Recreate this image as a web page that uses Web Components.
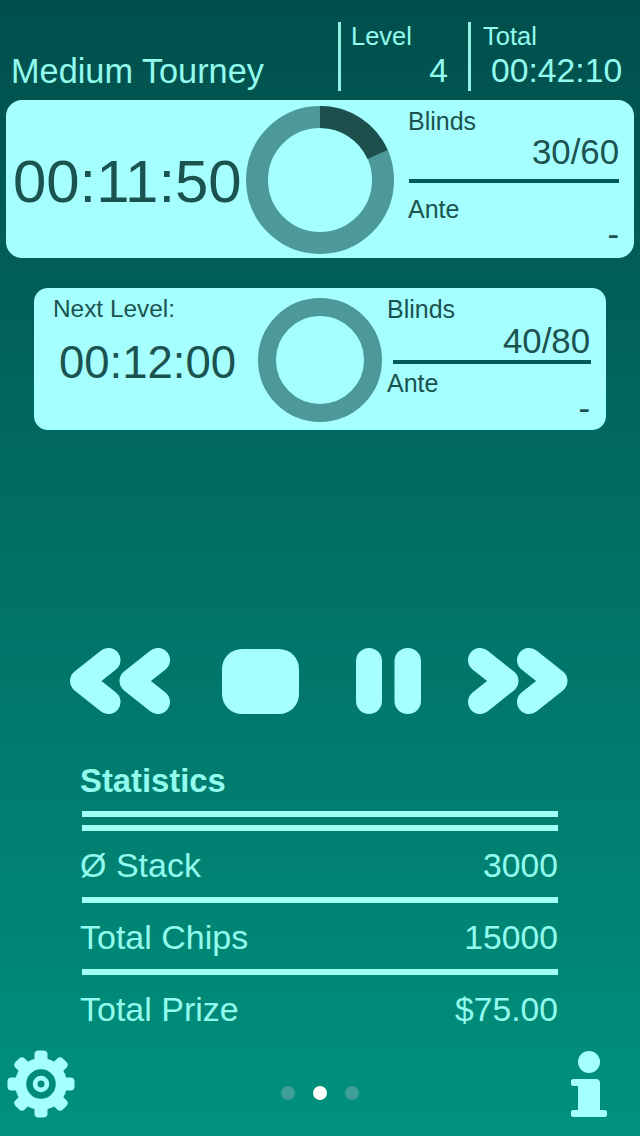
<!DOCTYPE html>
<html>
<head>
<meta charset="utf-8">
<title>Tourney</title>
<style>
    html, body {
        margin: 0;
        height: 1136px;
        overflow: hidden;
    }
    body {
        background: linear-gradient(180deg, #014f4c 0%, #00917e 100%);
        font-family: "Liberation Sans", Arial, sans-serif;
        color: #93fbee;
        display: flex;
        flex-direction: column;
    }
</style>
</head>
<body>
<tourney-header title="Medium Tourney" level="4" total="00:42:10"></tourney-header>
<timer-card time="00:11:50" blinds="30/60" ante="-" progress="66"></timer-card>
<timer-card compact time="00:12:00" blinds="40/80" ante="-">Next Level:</timer-card>
<transport-controls></transport-controls>
<stat-list heading="Statistics">
    <stat-row label="Ø Stack" value="3000"></stat-row>
    <stat-row label="Total Chips" value="15000"></stat-row>
    <stat-row label="Total Prize" value="$75.00"></stat-row>
</stat-list>
<bottom-bar></bottom-bar>

<script>
const components = [
    {
        name: 'tourney-header',
        class: class TourneyHeader extends HTMLElement {
            connectedCallback() {
                this.attachShadow({ mode: 'open' });
                this.shadowRoot.innerHTML = `
                    <style>
                        :host {
                            display: flex;
                            height: 69px;
                            padding-top: 22px;
                            margin-bottom: 9px;
                        }
                        .title {
                            width: 327px;
                            padding-left: 11px;
                            font-size: 34.3px;
                            line-height: 40px;
                            align-self: end;
                        }
                        .cell {
                            box-sizing: border-box;
                            border-left: 3px solid #8ff0e4;
                            width: 130px;
                            display: flex;
                            flex-direction: column;
                            padding-left: 10px;
                        }
                        .cell span:first-child {
                            font-size: 25.5px;
                            line-height: 28px;
                        }
                        .cell span:last-child {
                            font-size: 33.7px;
                            line-height: 40px;
                        }
                        .level span:last-child {
                            text-align: right;
                            padding-right: 20px;
                        }
                        .total {
                            width: 172px;
                            padding-left: 12px;
                        }
                        .total span:last-child {
                            padding-left: 8px;
                        }
                    </style>
                    <div class="title">${this.getAttribute('title')}</div>
                    <div class="cell level"><span>Level</span><span>${this.getAttribute('level')}</span></div>
                    <div class="cell total"><span>Total</span><span>${this.getAttribute('total')}</span></div>
                `;
            }
        }
    },
    {
        name: 'timer-card',
        class: class TimerCard extends HTMLElement {
            connectedCallback() {
                this.attachShadow({ mode: 'open' });
                const size = this.hasAttribute('compact') ? 124 : 148;
                const radius = this.hasAttribute('compact') ? 53 : 63;
                const width = this.hasAttribute('compact') ? 18 : 22;
                const circumference = 2 * Math.PI * radius;
                const progress = Number(this.getAttribute('progress') || 0) / 360 * circumference;
                this.shadowRoot.innerHTML = `
                    <style>
                        :host {
                            display: flex;
                            box-sizing: border-box;
                            width: 628px;
                            height: 158px;
                            margin-left: 6px;
                            background: #a5ffff;
                            border-radius: 16px;
                            color: #1b5350;
                            align-items: center;
                        }
                        :host([compact]) {
                            width: 572px;
                            height: 142px;
                            margin-left: 34px;
                            margin-top: 30px;
                            border-radius: 14px;
                        }
                        .clock {
                            box-sizing: border-box;
                            width: 240px;
                            padding-left: 7px;
                            font-size: 59.9px;
                            line-height: 64px;
                            margin-top: 6px;
                        }
                        :host([compact]) .clock {
                            width: 224px;
                            padding-left: 19px;
                            align-self: start;
                            margin-top: 7px;
                            font-size: 45.5px;
                            line-height: 50px;
                        }
                        .caption {
                            display: none;
                            font-size: 24.4px;
                            line-height: 28px;
                            margin-bottom: 15px;
                        }
                        :host([compact]) .caption {
                            display: block;
                        }
                        :host([compact]) .time {
                            margin-left: 6px;
                        }
                        svg {
                            display: block;
                            flex-shrink: 0;
                            margin-top: 2px;
                        }
                        .info {
                            align-self: start;
                            width: 211px;
                            margin-left: 14px;
                            padding-top: 7px;
                            display: flex;
                            flex-direction: column;
                        }
                        :host([compact]) .info {
                            width: 204px;
                            margin-left: 5px;
                        }
                        .label {
                            font-size: 25px;
                            line-height: 28px;
                        }
                        .value {
                            font-size: 34.8px;
                            line-height: 36px;
                            text-align: right;
                            margin-top: -1px;
                        }
                        :host([compact]) .value {
                            margin-top: 0;
                            padding-right: 1px;
                        }
                        .rule {
                            height: 3.5px;
                            background: #005a55;
                            margin: 9px 0 12px 1px;
                        }
                        :host([compact]) .rule {
                            margin: 1px 0 5px 6px;
                        }
                        .ante,
                        :host([compact]) .ante {
                            margin-top: -7px;
                        }
                    </style>
                    <div class="clock">
                        <div class="caption"><slot></slot></div>
                        <div class="time">${this.getAttribute('time')}</div>
                    </div>
                    <svg width="${size}" height="${size}" viewBox="0 0 ${size} ${size}">
                        <circle cx="${size / 2}" cy="${size / 2}" r="${radius}" fill="none" stroke="#4d9999" stroke-width="${width}"/>
                        <circle cx="${size / 2}" cy="${size / 2}" r="${radius}" fill="none" stroke="#1d4f4d" stroke-width="${width}"
                            stroke-dasharray="${progress} ${circumference}" transform="rotate(-90 ${size / 2} ${size / 2})"/>
                    </svg>
                    <div class="info">
                        <div class="label">Blinds</div>
                        <div class="value">${this.getAttribute('blinds')}</div>
                        <div class="rule"></div>
                        <div class="label">Ante</div>
                        <div class="value ante">${this.getAttribute('ante')}</div>
                    </div>
                `;
            }
        }
    },
    {
        name: 'transport-controls',
        class: class TransportControls extends HTMLElement {
            connectedCallback() {
                this.attachShadow({ mode: 'open' });
                this.shadowRoot.innerHTML = `
                    <style>
                        :host {
                            display: flex;
                            align-items: center;
                            height: 66px;
                            margin-top: 218px;
                            padding-left: 70px;
                        }
                        svg {
                            display: block;
                            flex-shrink: 0;
                        }
                        .stop { margin-left: 52px; }
                        .pause { margin-left: 57px; }
                        .forward { margin-left: 47px; }
                    </style>
                    <svg width="100" height="66" viewBox="0 0 100 66" fill="none" stroke="#a5ffff" stroke-width="24" stroke-linecap="round" stroke-linejoin="round">
                        <path d="M38.500 12 12 33 38.500 54"/>
                        <path d="M88 12 61.500 33 88 54"/>
                    </svg>
                    <svg class="stop" width="77" height="66" viewBox="0 0 77 66">
                        <rect x="0" y="1" width="77" height="65" rx="20" fill="#a5ffff"/>
                    </svg>
                    <svg class="pause" width="65" height="66" viewBox="0 0 65 66" fill="#a5ffff">
                        <rect x="0" y="0" width="26" height="66" rx="13"/>
                        <rect x="38.500" y="0" width="26.500" height="66" rx="13"/>
                    </svg>
                    <svg class="forward" width="100" height="66" viewBox="0 0 100 66" fill="none" stroke="#a5ffff" stroke-width="24" stroke-linecap="round" stroke-linejoin="round">
                        <path d="M12 12 38.500 33 12 54"/>
                        <path d="M61 12 87.500 33 61 54"/>
                    </svg>
                `;
            }
        }
    },
    {
        name: 'stat-list',
        class: class StatList extends HTMLElement {
            connectedCallback() {
                this.attachShadow({ mode: 'open' });
                this.shadowRoot.innerHTML = `
                    <style>
                        :host {
                            display: block;
                            width: 478px;
                            margin-left: 80px;
                            margin-top: 47px;
                        }
                        h2 {
                            margin: 0;
                            font-size: 32.8px;
                            line-height: 40px;
                            font-weight: bold;
                        }
                        .rule {
                            height: 6px;
                            margin: 10px 0 0 2px;
                            background: #9ffff3;
                            filter: blur(0.7px);
                        }
                        .rule + .rule {
                            margin-top: 8px;
                        }
                    </style>
                    <h2>${this.getAttribute('heading')}</h2>
                    <div class="rule"></div>
                    <div class="rule"></div>
                    <slot></slot>
                `;
            }
        }
    },
    {
        name: 'stat-row',
        class: class StatRow extends HTMLElement {
            connectedCallback() {
                this.attachShadow({ mode: 'open' });
                this.shadowRoot.innerHTML = `
                    <style>
                        :host {
                            display: block;
                            height: 72px;
                            box-sizing: border-box;
                            padding-top: 14px;
                        }
                        :host(:not(:last-child)) .line {
                            height: 6px;
                            margin: 12px 0 0 2px;
                            background: #9ffff3;
                            filter: blur(0.7px);
                        }
                        .row {
                            display: flex;
                            justify-content: space-between;
                            font-size: 34px;
                            line-height: 40px;
                        }
                        .row span:last-child {
                            font-size: 33.7px;
                        }
                    </style>
                    <div class="row"><span>${this.getAttribute('label')}</span><span>${this.getAttribute('value')}</span></div>
                    <div class="line"></div>
                `;
            }
        }
    },
    {
        name: 'bottom-bar',
        class: class BottomBar extends HTMLElement {
            connectedCallback() {
                this.attachShadow({ mode: 'open' });
                const teeth = [0, 45, 90, 135, 180, 225, 270, 315].map(angle =>
                    `<rect x="30.500" y="1.500" width="13" height="18" rx="4" transform="rotate(${angle} 37 35)"/>`
                ).join('');
                this.shadowRoot.innerHTML = `
                    <style>
                        :host {
                            display: flex;
                            align-items: center;
                            justify-content: space-between;
                            height: 70px;
                            margin-top: 2px;
                            padding: 0 33px 0 4px;
                        }
                        .dots {
                            display: flex;
                            gap: 18px;
                            margin-top: 18px;
                            margin-right: 10px;
                        }
                        .dots i {
                            width: 14px;
                            height: 14px;
                            border-radius: 50%;
                            background: #3f9e96;
                        }
                        .dots i.on {
                            background: #ffffff;
                        }
                        .info {
                            margin-top: 2px;
                        }
                        svg {
                            display: block;
                            flex-shrink: 0;
                        }
                    </style>
                    <svg width="74" height="70" viewBox="0 0 74 70">
                        <g fill="#a5ffff">${teeth}<circle cx="37" cy="35" r="26"/></g>
                        <circle cx="37" cy="35" r="11.500" fill="none" stroke="#008a79" stroke-width="6.500"/>
                        <circle cx="37" cy="35" r="3.500" fill="#008a79"/>
                    </svg>
                    <div class="dots"><i></i><i class="on"></i><i></i></div>
                    <svg class="info" width="36" height="68" viewBox="0 0 36 68" fill="#a5ffff">
                        <circle cx="18" cy="11" r="11"/>
                        <path d="M3 28H25a4 4 0 0 1 4 4V59H33a3.500 3.500 0 0 1 0 7H3a3.500 3.500 0 0 1 0-7H7V35H3a3.500 3.500 0 0 1 0-7Z"/>
                    </svg>
                `;
            }
        }
    }
];
components.forEach(component => {
    customElements.define(component.name, component.class);
});
</script>
</body>
</html>
